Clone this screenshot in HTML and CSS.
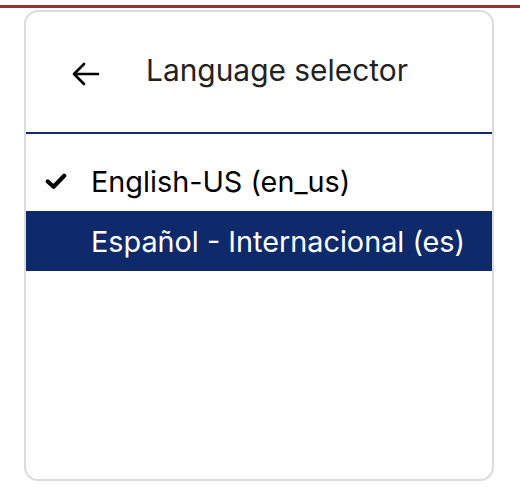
FILE: index.html
```html
<!DOCTYPE html>
<html>
<head>
<meta charset="utf-8">
<link rel="stylesheet" href="styles.css">
</head>
<body>
<div class="topbar"></div>
<div class="card">
  <div class="header">
    <span class="back">
      <svg width="30" height="26" viewBox="0 0 30 26"><path d="M28 13H4M14 3L4 13l10 10" fill="none" stroke="#000" stroke-width="2.6" stroke-linecap="round" stroke-linejoin="round"/></svg>
    </span>
    <span class="title">Language selector</span>
  </div>
  <ul class="list">
    <li class="item">
      <span class="check"><svg width="22" height="16" viewBox="0 0 22 16"><path d="M2.8 8.5l5.8 5.2L19.2 2.8" fill="none" stroke="#000" stroke-width="4.2" stroke-linecap="round" stroke-linejoin="round"/></svg></span>
      <span>English-US (en_us)</span>
    </li>
    <li class="item selected">
      <span class="check"></span>
      <span>Español - Internacional (es)</span>
    </li>
  </ul>
</div>
</body>
</html>
```
FILE: styles.css
```css
html, body {
  margin: 0;
  padding: 0;
  background: #fff;
}
body {
  font-family: Inter, "Noto Sans", sans-serif;
  color: #1f1f1f;
  padding-top: 5px;
}
.topbar {
  height: 3px;
  background: #8f3431;
}
.card {
  margin: 2px 0 0 24px;
  width: 466px;
  height: 467px;
  border: 2px solid #dcdcdc;
  border-radius: 14px;
  overflow: hidden;
}
.header {
  height: 120px;
  border-bottom: 2px solid #0f2a6b;
  display: flex;
  align-items: center;
  padding-left: 44px;
  gap: 46px;
}
.back {
  display: flex;
  margin-top: 4px;
}
.title {
  font-size: 29.9px;
  color: #222;
  margin-bottom: 4px;
}
.list {
  list-style: none;
  margin: 17px 0 0;
  padding: 0;
}
.item {
  height: 60px;
  display: flex;
  align-items: center;
  font-size: 28.8px;
  color: #000;
  padding-left: 19px;
}
.check {
  width: 46px;
  display: flex;
}
.item.selected {
  background: #0f2a6b;
  color: #fff;
}
```
